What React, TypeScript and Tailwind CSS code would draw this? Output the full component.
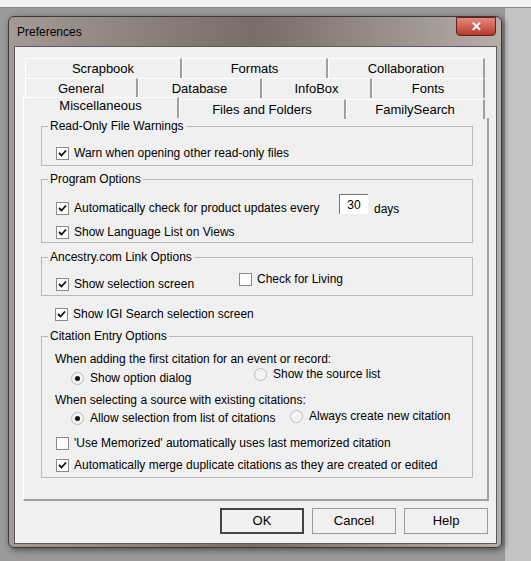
import React from "react";

const Check = ({ on }: { on: boolean }) => (
  <span className="inline-flex w-[13px] h-[13px] border border-[#8a8a8a] bg-white items-center justify-center shrink-0">
    {on && (
      <svg width="9" height="9" viewBox="0 0 9 9"><path d="M1 4 L3.5 6.5 L8 1.5" stroke="#111" strokeWidth="1.8" fill="none" /></svg>
    )}
  </span>
);
const Radio = ({ on }: { on: boolean }) => (
  <span className="inline-flex w-[13px] h-[13px] rounded-full border border-[#bbb] bg-[#f4f4f4] items-center justify-center shrink-0">
    {on && <span className="w-[5px] h-[5px] rounded-full bg-[#111]" />}
  </span>
);
const CB = ({ on, label, cls = "" }: { on: boolean; label: string; cls?: string }) => (
  <div className={"flex items-center gap-[5px] " + cls}><Check on={on} /><span>{label}</span></div>
);
const RB = ({ on, label, cls = "" }: { on: boolean; label: string; cls?: string }) => (
  <div className={"flex items-center gap-[6px] " + cls}><Radio on={on} /><span>{label}</span></div>
);
const Group = ({ title, h, children }: { title: string; h: number; children: React.ReactNode }) => (
  <div className="relative border border-[#b8b8b8] ml-[17px] w-[432px]" style={{ height: h }}>
    <span className="absolute -top-[9px] left-[6px] bg-[#f0f0f0] px-[2px] leading-[16px]">{title}</span>
    {children}
  </div>
);
const Tab = ({ w, label, tall = false }: { w: number; label: string; tall?: boolean }) => (
  <div className={"flex items-center justify-center border-t border-l border-white border-r-2 border-r-[#a0a0a0] bg-[#f0f0f0] " + (tall ? "h-[22px] pb-[5px]" : "h-[20px]")} style={{ width: w }}>{label}</div>
);

export default function App() {
  return (
    <div className="w-[531px] h-[561px] bg-[#9a9a9a] relative overflow-hidden text-[12px] text-black" style={{ fontFamily: '"Liberation Sans", Arial, sans-serif' }}>
      <div className="h-[8px] bg-[#f0f0f0] border-b border-[#888]" />
      <div className="absolute left-[505px] top-[8px] w-[26px] h-[553px] bg-[#c4c4c4]" />
      <div className="absolute left-[8px] top-[16px] w-[494px] h-[532px] rounded-[6px] border border-[#3a3a3a] bg-gradient-to-r from-[#a39a96] via-[#7a6c66] to-[#b6aeaa] shadow-[2px_2px_6px_rgba(0,0,0,0.5)]">
        <div className="h-[29px] flex items-center pl-[8px] text-[12px]">Preferences</div>
        <div className="absolute right-[5px] top-0 w-[40px] h-[19px] rounded-b-[4px] bg-gradient-to-b from-[#e48a7c] to-[#b5382a] border border-[#6a2018] flex items-center justify-center text-white font-bold text-[13px]">✕</div>
        <div className="absolute left-[5px] top-[29px] w-[483px] h-[498px] bg-[#f0f0f0] border border-[#5a5a5a]">
          <div className="pl-[10px] pt-[11px] text-[13px]">
            <div className="flex"><Tab w={157} label="Scrapbook" /><Tab w={146} label="Formats" /><Tab w={157} label="Collaboration" /></div>
            <div className="flex"><Tab w={113} label="General" /><Tab w={124} label="Database" /><Tab w={110} label="InfoBox" /><Tab w={113} label="Fonts" /></div>
            <div className="flex -ml-[2px] -mt-[1px]"><Tab w={156} label="Miscellaneous" tall /><div className="mt-[2px] flex"><Tab w={167} label="Files and Folders" /><Tab w={139} label="FamilySearch" /></div></div>
          </div>
          <div className="ml-[8px] -mt-[1px] w-[466px] h-[383px] border-r-2 border-b-2 border-[#a0a0a0] border-l border-l-white pt-[8px]">
            <Group title="Read-Only File Warnings" h={40}>
              <CB on label="Warn when opening other read-only files" cls="absolute left-[14px] top-[17px]" />
            </Group>
            <div className="h-[13px]" />
            <Group title="Program Options" h={64}>
              <CB on label="Automatically check for product updates every" cls="absolute left-[14px] top-[19px]" />
              <div className="absolute left-[297px] top-[14px] w-[29px] h-[20px] bg-white border-t border-l border-[#777] flex items-center justify-center">30</div>
              <span className="absolute left-[332px] top-[20px]">days</span>
              <CB on label="Show Language List on Views" cls="absolute left-[14px] top-[43px]" />
            </Group>
            <div className="h-[14px]" />
            <Group title="Ancestry.com Link Options" h={39}>
              <CB on label="Show selection screen" cls="absolute left-[14px] top-[17px]" />
              <CB on={false} label="Check for Living" cls="absolute left-[197px] top-[12px]" />
            </Group>
            <CB on label="Show IGI Search selection screen" cls="ml-[31px] mt-[11px] h-[14px]" />
            <div className="h-[15px]" />
            <Group title="Citation Entry Options" h={142}>
              <div className="absolute left-[13px] top-[13px]">When adding the first citation for an event or record:</div>
              <RB on label="Show option dialog" cls="absolute left-[29px] top-[32px]" />
              <RB on={false} label="Show the source list" cls="absolute left-[212px] top-[28px]" />
              <div className="absolute left-[13px] top-[54px]">When selecting a source with existing citations:</div>
              <RB on label="Allow selection from list of citations" cls="absolute left-[29px] top-[72px]" />
              <RB on={false} label="Always create new citation" cls="absolute left-[248px] top-[70px]" />
              <CB on={false} label="'Use Memorized' automatically uses last memorized citation" cls="absolute left-[14px] top-[97px]" />
              <CB on label="Automatically merge duplicate citations as they are created or edited" cls="absolute left-[14px] top-[119px]" />
            </Group>
          </div>
          <div className="flex justify-end gap-[8px] pr-[8px] mt-[7px] text-[13px]">
            {["OK", "Cancel", "Help"].map(t => (
              <div key={t} className={"w-[84px] h-[26px] flex items-center justify-center bg-[#f0f0f0] border " + (t === "OK" ? "border-[#444] border-2" : "border-[#999]")}>{t}</div>
            ))}
          </div>
        </div>
      </div>
    </div>
  );
}
